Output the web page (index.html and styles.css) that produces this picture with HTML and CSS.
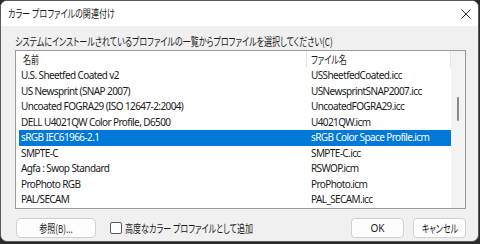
FILE: index.html
```html
<!DOCTYPE html>
<html lang="ja">
<head>
<meta charset="utf-8">
<link rel="stylesheet" href="styles.css">
</head>
<body>
<div class="window">
  <div class="titlebar">
    <div class="title"><span class="jp">カラー プロファイルの関連付け</span></div>
    <svg class="close" width="10" height="10" viewBox="0 0 10 10"><path d="M0.5 0.5L9.5 9.5M9.5 0.5L0.5 9.5" stroke="#333" stroke-width="1"/></svg>
  </div>
  <div class="content">
    <div class="label"><span class="jp">システムにインストールされているプロファイルの一覧からプロファイルを選択してください(C)</span></div>
    <div class="listbox">
      <div class="list">
        <div class="header">
          <div class="hcell name"><span class="jp">名前</span></div>
          <div class="hcell file"><span class="jp">ファイル名</span></div>
        </div>
        <div class="row"><span class="name">U.S. Sheetfed Coated v2</span><span class="file">USSheetfedCoated.icc</span></div>
        <div class="row"><span class="name">US Newsprint (SNAP 2007)</span><span class="file">USNewsprintSNAP2007.icc</span></div>
        <div class="row"><span class="name">Uncoated FOGRA29 (ISO 12647-2:2004)</span><span class="file">UncoatedFOGRA29.icc</span></div>
        <div class="row"><span class="name">DELL U4021QW Color Profile, D6500</span><span class="file">U4021QW.icm</span></div>
        <div class="row selected"><span class="name">sRGB IEC61966-2.1</span><span class="file">sRGB Color Space Profile.icm</span></div>
        <div class="row"><span class="name">SMPTE-C</span><span class="file">SMPTE-C.icc</span></div>
        <div class="row"><span class="name">Agfa : Swop Standard</span><span class="file">RSWOP.icm</span></div>
        <div class="row"><span class="name">ProPhoto RGB</span><span class="file">ProPhoto.icm</span></div>
        <div class="row"><span class="name">PAL/SECAM</span><span class="file">PAL_SECAM.icc</span></div>
      </div>
      <div class="scrollbar"><div class="thumb"></div></div>
    </div>
    <div class="footer">
      <button class="btn browse"><span class="jp c">参照(B)...</span></button>
      <label class="check"><span class="box"></span><span class="jp">高度なカラー プロファイルとして追加</span></label>
      <div class="spacer"></div>
      <button class="btn ok">OK</button>
      <button class="btn cancel"><span class="jp c">キャンセル</span></button>
    </div>
  </div>
</div>
</body>
</html>
```

FILE: styles.css
```css
* { box-sizing: border-box; }
html, body { margin: 0; padding: 0; }
body {
  width: 480px;
  height: 244px;
  background: #2a2a2a;
  font-family: "Noto Sans", "Noto Sans CJK JP", sans-serif;
  font-size: 10px;
  color: #1a1a1a;
}
.jp {
  display: inline-block;
  white-space: nowrap;
  font-family: "Noto Sans CJK JP", sans-serif;
  font-size: 11px;
  font-feature-settings: "palt";
  transform: scaleX(0.73);
  transform-origin: left center;
}
.jp.c { transform-origin: center center; }
.window {
  width: 479px;
  height: 242px;
  background: #f0f0f0;
  border: 1px solid #5a5a5a;
  border-radius: 7px;
  overflow: hidden;
  display: flex;
  flex-direction: column;
}
.titlebar {
  height: 25px;
  background: #ffffff;
  display: flex;
  align-items: center;
  padding: 0 7px 0 7px;
  flex: none;
}
.title { flex: 1; line-height: 14px; }
.content {
  flex: 1;
  display: flex;
  flex-direction: column;
  padding: 8px 12px 0 14px;
}
.label { height: 16px; line-height: 14px; }
.listbox {
  height: 159px;
  border: 1px solid #9a9a9a;
  background: #fff;
  display: flex;
  padding: 0 0 0 3px;
}
.list { flex: 1; display: flex; flex-direction: column; }
.header {
  display: flex;
  height: 17px;
}
.hcell { line-height: 16px; padding-left: 4px; }
.header .name { width: 288px; border-right: 1px solid #e5e5e5; }
.header .file { flex: 1; border-right: 1px solid #e5e5e5; }
.row {
  display: flex;
  height: 15.5px;
  line-height: 15px;
  padding-left: 2px;
  letter-spacing: -0.6px;
  white-space: nowrap;
}
.row .name { width: 290px; }
.row .file { flex: 1; }
.row.selected { background: #0078d7; color: #fff; }
.scrollbar {
  width: 14px;
  background: #f3f3f3;
  position: relative;
  flex: none;
}
.thumb {
  position: absolute;
  left: 6px;
  top: 46px;
  width: 2px;
  height: 24px;
  background: #8a8a8a;
  border-radius: 1px;
}
.footer {
  display: flex;
  align-items: center;
  margin-top: 9px;
  height: 20px;
}
.btn {
  height: 20px;
  background: #fdfdfd;
  border: 1px solid #d0d0d0;
  border-radius: 4px;
  font-size: 10px;
  color: #1a1a1a;
  padding: 0;
  font-family: "Noto Sans", sans-serif;
}
.browse { width: 80px; margin-left: 1px; }
.check {
  display: flex;
  align-items: center;
  margin-left: 14px;
}
.box {
  width: 12px;
  height: 12px;
  border: 1px solid #5a5a5a;
  border-radius: 2px;
  background: #fff;
  margin-right: 3px;
}
.spacer { flex: 1; }
.ok { width: 53px; }
.cancel { width: 53px; margin-left: 9px; }
```
